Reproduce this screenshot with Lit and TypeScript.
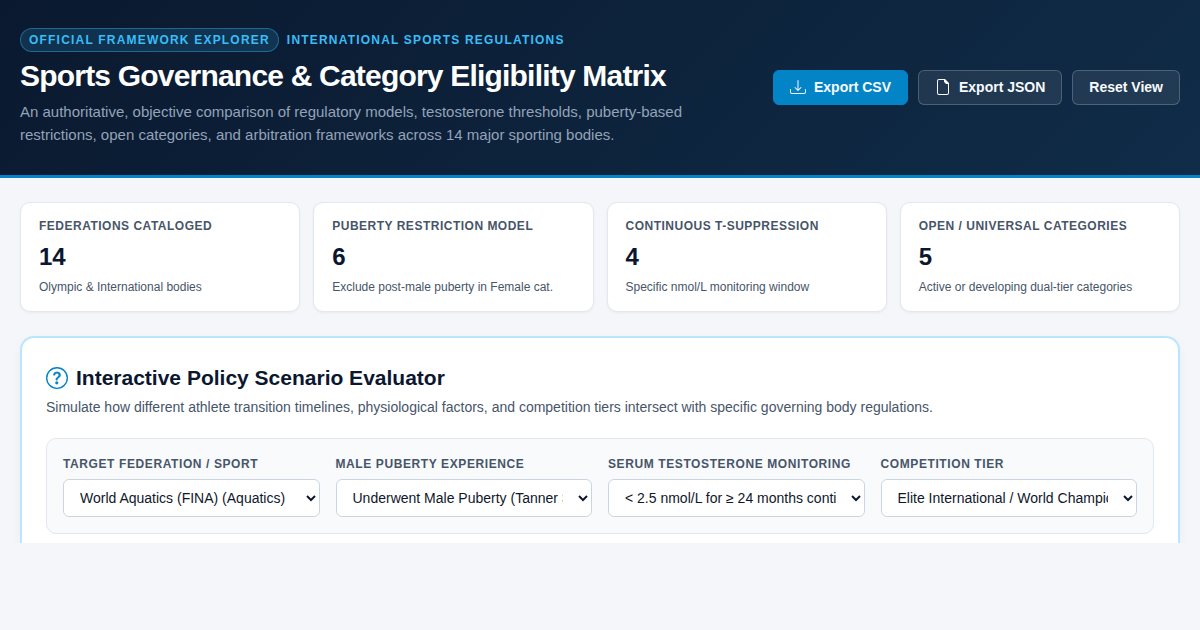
import { LitElement, html, css, svg } from "lit";
import { customElement } from "lit/decorators.js";

interface Metric {
  label: string;
  value: number;
  note: string;
}

interface Field {
  id: string;
  label: string;
  options: string[];
}

const METRICS: Metric[] = [
  { label: "Federations Cataloged", value: 14, note: "Olympic & International bodies" },
  { label: "Puberty Restriction Model", value: 6, note: "Exclude post-male puberty in Female cat." },
  { label: "Continuous T-Suppression", value: 4, note: "Specific nmol/L monitoring window" },
  { label: "Open / Universal Categories", value: 5, note: "Active or developing dual-tier categories" },
];

const FIELDS: Field[] = [
  { id: "federation", label: "Target Federation / Sport", options: ["World Aquatics (FINA) (Aquatics)"] },
  { id: "puberty", label: "Male Puberty Experience", options: ["Underwent Male Puberty (Tanner Stage 2+)"] },
  { id: "serum", label: "Serum Testosterone Monitoring", options: ["< 2.5 nmol/L for ≥ 24 months continuous"] },
  { id: "tier", label: "Competition Tier", options: ["Elite International / World Championship"] },
];

const downloadIcon = svg`
  <path d="M.5 9.9a.5.5 0 0 1 .5.5v2.5a1 1 0 0 0 1 1h12a1 1 0 0 0 1-1v-2.5a.5.5 0 0 1 1 0v2.5a2 2 0 0 1-2 2H2a2 2 0 0 1-2-2v-2.5a.5.5 0 0 1 .5-.5z"/>
  <path d="M7.646 11.854a.5.5 0 0 0 .708 0l3-3a.5.5 0 0 0-.708-.708L8.5 10.293V1.5a.5.5 0 0 0-1 0v8.793L5.354 8.146a.5.5 0 1 0-.708.708l3 3z"/>`;

const fileIcon = svg`
  <path d="M4 0h6l4 4v10a2 2 0 0 1-2 2H4a2 2 0 0 1-2-2V2a2 2 0 0 1 2-2zm0 1a1 1 0 0 0-1 1v12a1 1 0 0 0 1 1h8a1 1 0 0 0 1-1V5h-1.500a1 1 0 0 1-.7-.3L9.300 3.200A1 1 0 0 1 9 2.500V1H4z"/>`;

const questionIcon = svg`
  <path d="M8 15A7 7 0 1 1 8 1a7 7 0 0 1 0 14zm0 1A8 8 0 1 0 8 0a8 8 0 0 0 0 16z"/>
  <path stroke="currentColor" stroke-width=".2" d="M5.255 5.786a.237.237 0 0 0 .241.247h.825c.138 0 .248-.113.266-.25.09-.656.54-1.134 1.342-1.134.686 0 1.314.343 1.314 1.168 0 .635-.374.927-.965 1.371-.673.489-1.206 1.06-1.168 1.987l.003.217a.25.25 0 0 0 .25.246h.811a.25.25 0 0 0 .25-.25v-.105c0-.718.273-.927 1.01-1.486.609-.463 1.244-.977 1.244-2.056 0-1.511-1.276-2.241-2.673-2.241-1.267 0-2.655.59-2.75 2.286zm1.557 5.763c0 .533.425.927 1.01.927.609 0 1.028-.394 1.028-.927 0-.552-.42-.94-1.029-.94-.584 0-1.009.388-1.009.94z"/>`;

@customElement("app-root")
export class AppRoot extends LitElement {
  static styles = css`
    :host {
      display: block;
      min-height: 100vh;
      background: #f4f6fa;
      color: #0b1730;
      font-family: "Liberation Sans", Arial, sans-serif;
      font-size: 14px;
      line-height: 21px;
    }
    *, *::before, *::after { box-sizing: border-box; }
    h1, h2, p { margin: 0; }
    .header {
      display: flex;
      align-items: center;
      justify-content: space-between;
      gap: 24px;
      padding: 28px 20px;
      background: linear-gradient(135deg, #0a192f 0%, #102c48 100%);
      border-bottom: 3px solid #0284c7;
    }
    .intro {
      max-width: 720px;
      padding-bottom: 1px;
    }
    .eyebrow {
      display: flex;
      align-items: center;
      gap: 8px;
      color: #38bdf8;
      font-size: 12px;
      line-height: 18px;
      font-weight: 700;
      letter-spacing: 1.2px;
      text-transform: uppercase;
    }
    .badge {
      padding: 2px 8px;
      border: 1px solid rgba(56, 189, 248, 0.4);
      border-radius: 12px;
      background: rgba(56, 189, 248, 0.15);
    }
    .title {
      margin-top: 6px;
      color: #fff;
      font-size: 30px;
      line-height: 36px;
      letter-spacing: -0.8px;
    }
    .lead {
      margin-top: 6px;
      color: #94a3b8;
      font-size: 15px;
      line-height: 23px;
    }
    .actions {
      display: flex;
      flex-shrink: 0;
      gap: 10px;
    }
    .btn {
      display: inline-flex;
      align-items: flex-start;
      gap: 8px;
      padding: 8px 16px;
      border: 1px solid rgba(255, 255, 255, 0.2);
      border-radius: 6px;
      background: rgba(255, 255, 255, 0.08);
      color: #f8fafc;
      font: 700 14px/17px "Liberation Sans", Arial, sans-serif;
      cursor: pointer;
    }
    .btn.primary {
      border-color: #0284c7;
      background: #0284c7;
    }
    .icon {
      width: 16px;
      height: 16px;
      fill: currentColor;
    }
    .main {
      padding: 24px 20px 0;
    }
    .metrics {
      display: grid;
      grid-template-columns: repeat(4, 1fr);
      gap: 13px;
    }
    .metric {
      padding: 14px 18px 15px;
      border: 1px solid #e2e8f0;
      border-radius: 10px;
      background: #fff;
      box-shadow: 0 1px 3px rgba(0, 0, 0, 0.05);
    }
    .metric-label {
      color: #475569;
      font-size: 12px;
      line-height: 18px;
      font-weight: 700;
      letter-spacing: 0.5px;
      text-transform: uppercase;
    }
    .metric-value {
      margin: 4px 0 3px;
      font-size: 24px;
      line-height: 36px;
      font-weight: 700;
    }
    .metric-note {
      color: #475569;
      font-size: 12px;
      line-height: 18px;
    }
    .evaluator {
      margin-top: 24px;
      padding: 24px 24px 9px;
      border: 2px solid #bae6fd;
      border-bottom: 0;
      border-radius: 14px 14px 0 0;
      background: #fff;
      box-shadow: 0 4px 12px rgba(15, 23, 42, 0.04);
      clip-path: inset(-12px -12px 0);
    }
    .heading {
      display: flex;
      align-items: center;
      gap: 8px;
      font-size: 21px;
      line-height: 31px;
    }
    .heading-icon {
      width: 22px;
      height: 22px;
      color: #0284c7;
      fill: currentColor;
    }
    .summary {
      margin-top: 4px;
      color: #475569;
    }
    .form {
      display: grid;
      grid-template-columns: repeat(4, minmax(0, 1fr));
      gap: 16px;
      margin-top: 20px;
      padding: 16px;
      border: 1px solid #e2e8f0;
      border-radius: 10px;
      background: #f8fafc;
    }
    .field {
      display: flex;
      flex-direction: column;
      gap: 6px;
    }
    .label {
      color: #475569;
      font-size: 12px;
      line-height: 18px;
      font-weight: 700;
      letter-spacing: 0.6px;
      text-transform: uppercase;
    }
    .select {
      width: 100%;
      padding: 9px 12px;
      border: 1px solid #cbd5e1;
      border-radius: 6px;
      background: #fff;
      color: #0f172a;
      font: 14px "Liberation Sans", Arial, sans-serif;
    }
    @media (max-width: 960px) {
      .header { flex-wrap: wrap; }
      .metrics { grid-template-columns: repeat(2, 1fr); }
      .form { grid-template-columns: repeat(2, minmax(0, 1fr)); }
    }
  `;

  render() {
    return html`
      <header class="header">
        <div class="intro">
          <div class="eyebrow">
            <span class="badge">Official Framework Explorer</span>
            <span>International Sports Regulations</span>
          </div>
          <h1 class="title">Sports Governance &amp; Category Eligibility Matrix</h1>
          <p class="lead">
            An authoritative, objective comparison of regulatory models, testosterone thresholds, puberty-based
            restrictions, open categories, and arbitration frameworks across 14 major sporting bodies.
          </p>
        </div>
        <div class="actions">
          <button class="btn primary" type="button">
            <svg class="icon" viewBox="0 0 16 16" aria-hidden="true">${downloadIcon}</svg>Export CSV
          </button>
          <button class="btn" type="button">
            <svg class="icon" viewBox="0 0 16 16" aria-hidden="true">${fileIcon}</svg>Export JSON
          </button>
          <button class="btn" type="button">Reset View</button>
        </div>
      </header>
      <main class="main">
        <section class="metrics">
          ${METRICS.map(
            (m) => html`
              <div class="metric">
                <div class="metric-label">${m.label}</div>
                <div class="metric-value">${m.value}</div>
                <div class="metric-note">${m.note}</div>
              </div>
            `,
          )}
        </section>
        <section class="evaluator">
          <h2 class="heading">
            <svg class="heading-icon" viewBox="0 0 16 16" aria-hidden="true">${questionIcon}</svg>
            Interactive Policy Scenario Evaluator
          </h2>
          <p class="summary">
            Simulate how different athlete transition timelines, physiological factors, and competition tiers intersect
            with specific governing body regulations.
          </p>
          <form class="form">
            ${FIELDS.map(
              (f) => html`
                <div class="field">
                  <label class="label" for=${f.id}>${f.label}</label>
                  <select class="select" id=${f.id}>
                    ${f.options.map((o) => html`<option>${o}</option>`)}
                  </select>
                </div>
              `,
            )}
          </form>
        </section>
      </main>
    `;
  }
}
